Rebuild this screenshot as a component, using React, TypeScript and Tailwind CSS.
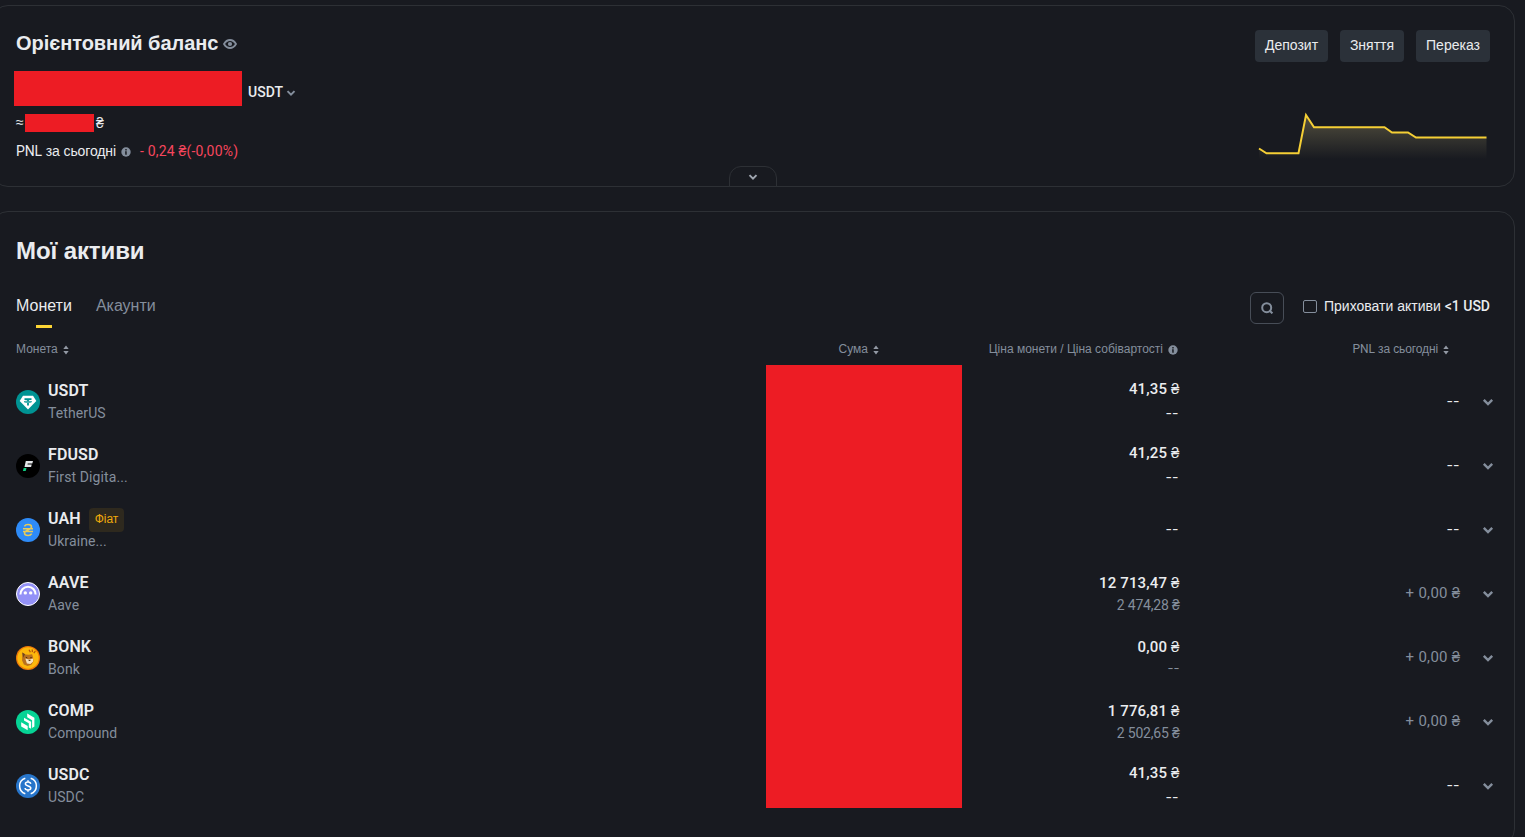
import type { ReactNode } from "react";

type Coin = {
    symbol: string;
    name: string;
    icon: ReactNode;
    badge?: string;
    price?: string;
    cost?: string;
    muted?: boolean;
    pnl?: string;
};

function ChevronDown({ className, size }: { className?: string; size: number }) {
    return (
        <svg width={size} height={size} viewBox="0 0 12 12" fill="none" className={className}>
            <path d="M1.800 3.800L6 8l4.200-4.200" stroke="currentColor" strokeWidth="2.400" />
        </svg>
    );
}

function SortIcon() {
    return (
        <svg width="6" height="10" viewBox="0 0 6 10" className="mt-0.5 ml-[5px] shrink-0 text-[#9299a4]">
            <path d="M0.300 4L3 0.600 5.700 4zM0.300 6L3 9.400 5.700 6z" fill="currentColor" />
        </svg>
    );
}

function InfoIcon({ className }: { className?: string }) {
    return (
        <svg width="10" height="10" viewBox="0 0 10 10" className={className}>
            <circle cx="5" cy="5" r="4.700" fill="#848e9c" />
            <path d="M4.100 4.300h1.600v3.500H4.300M4.300 2.100h1.400v1.300H4.300z" fill="#181a20" />
        </svg>
    );
}

function EyeIcon() {
    return (
        <svg width="14" height="10" viewBox="0 0 14 10" fill="none" className="mt-px ml-[5px]">
            <path d="M1 5c1.500-2.600 3.500-4 6-4s4.500 1.400 6 4c-1.500 2.600-3.500 4-6 4S2.500 7.600 1 5z" stroke="#848e9c" strokeWidth="1.800" />
            <circle cx="7" cy="5" r="2.100" fill="#848e9c" />
        </svg>
    );
}

const TetherIcon = (
    <svg width="24" height="24" viewBox="0 0 24 24" className="shrink-0">
        <circle cx="12" cy="12" r="12" fill="#009393" />
        <path d="M7 5.800h10l3.300 5.200L12 19.400 3.700 11z" fill="#fff" />
        <path d="M8.500 8.200h7v1.700h-2.600v.9c1.800.1 3.100.5 3.100 1s-1.300 1-3.100 1.100v2.500h-1.800v-2.500C9.300 12.800 8 12.400 8 11.800s1.300-.9 3.100-1v-.9H8.500z" fill="#009393" />
        <path d="M9.200 11.800c1.700.5 3.900.5 5.600 0" fill="none" stroke="#fff" strokeWidth=".5" />
    </svg>
);

const FdusdIcon = (
    <svg width="24" height="24" viewBox="0 0 24 24" className="shrink-0">
        <circle cx="12" cy="12" r="12" fill="#000" />
        <path d="M9.800 7h7.200l-.7 2.600h-4.600l-.2.900h4.200l-.6 2.500H8.500z" fill="#e4e6e8" />
        <path d="M7.700 13.900h2.800l-.8 3.100H6.900z" fill="#0ecb81" />
    </svg>
);

const UahIcon = (
    <svg width="24" height="24" viewBox="0 0 24 24" className="shrink-0">
        <circle cx="12" cy="12" r="12" fill="#2e8bf7" />
        <path
            d="M8.400 8.300C9 7.200 10.300 6.600 12 6.600c2.100 0 3.500.9 3.500 2.400 0 3-7 2.900-7 6 0 1.600 1.500 2.500 3.600 2.500 1.700 0 3-.7 3.600-1.800M7 10.700h10M7 13.400h10"
            fill="none"
            stroke="#e6cb5a"
            strokeWidth="1.500"
        />
    </svg>
);

const AaveIcon = (
    <svg width="24" height="24" viewBox="0 0 24 24" className="shrink-0">
        <circle cx="12" cy="12" r="11.500" fill="#9391f7" stroke="#fff" />
        <path d="M4.400 12.600C4.400 8.100 7.700 4.700 12 4.700s7.600 3.400 7.600 7.900" fill="none" stroke="#fff" strokeWidth="2.100" />
        <circle cx="9.300" cy="10.900" r="1.700" fill="#fff" />
        <circle cx="14.700" cy="10.900" r="1.700" fill="#fff" />
    </svg>
);

const BonkIcon = (
    <svg width="24" height="24" viewBox="0 0 24 24" className="shrink-0">
        <circle cx="12" cy="12" r="12" fill="#ee7a08" />
        <circle cx="12" cy="12" r="10.700" fill="#fcb80c" />
        <path d="M6.300 6.400l3.300 2.200 3.300.1 3.200-.5 1 3.300.3 4-2 3.300-3.800 1.100-3.700-1.500-1.800-4z" fill="#b9701f" />
        <path d="M9.300 12.600l3.600.9 4.300-1-.2 3.200-2.600 2.300-3.500-.6z" fill="#f6e0bb" />
        <path d="M6.300 6.400L9 8.200l-1.800 3.500z" fill="#6e4520" />
        <path d="M9.800 11.300l1.500.5M14.300 11.700l1.400-.2M12.700 14.500l1.800-.2" stroke="#4a2c12" strokeWidth="1" />
        <path d="M13 3.800l1.400 2.400M16.200 3.500l.2 2.600M19.400 5.200l-1.600 2" stroke="#b5500b" strokeWidth="1.200" />
    </svg>
);

const CompIcon = (
    <svg width="24" height="24" viewBox="0 0 24 24" className="shrink-0">
        <circle cx="12" cy="12" r="12" fill="#06d395" />
        <path d="M11.200 3.500l7.200 4.200v8.800l-2.300 1.400V10.200l-4.900-2.900z" fill="#fff" />
        <path d="M8 7.700l7.100 4.100v7l-2.300-1.300v-4.300L8 10.400z" fill="#fff" />
        <path d="M5.200 12.200l6.500 3.700v4.400l-6.500-3.700z" fill="#fff" />
    </svg>
);

const UsdcIcon = (
    <svg width="24" height="24" viewBox="0 0 24 24" fill="none" stroke="#fff" className="shrink-0">
        <circle cx="12" cy="12" r="12" fill="#2775ca" stroke="none" />
        <path d="M9.300 4.200a8.200 8.200 0 0 0 0 15.600M14.700 4.200a8.200 8.200 0 0 1 0 15.600" strokeWidth="1.500" />
        <path d="M14.700 9.900c-.1-1.300-1.100-2-2.700-2s-2.600.7-2.600 1.900c0 2.900 5.400 1.300 5.400 4.300 0 1.300-1.100 2-2.800 2s-2.800-.8-2.900-2.100M12 6.200v1.700M12 16v1.800" strokeWidth="1.500" />
    </svg>
);

const coins: Coin[] = [
    { symbol: "USDT", name: "TetherUS", icon: TetherIcon, price: "41,35" },
    { symbol: "FDUSD", name: "First Digita...", icon: FdusdIcon, price: "41,25" },
    { symbol: "UAH", name: "Ukraine...", icon: UahIcon, badge: "Фіат" },
    { symbol: "AAVE", name: "Aave", icon: AaveIcon, price: "12 713,47", cost: "2 474,28 ₴", muted: true, pnl: "+ 0,00 ₴" },
    { symbol: "BONK", name: "Bonk", icon: BonkIcon, price: "0,00", muted: true, pnl: "+ 0,00 ₴" },
    { symbol: "COMP", name: "Compound", icon: CompIcon, price: "1 776,81", cost: "2 502,65 ₴", muted: true, pnl: "+ 0,00 ₴" },
    { symbol: "USDC", name: "USDC", icon: UsdcIcon, price: "41,35" },
];

function Cost({ coin }: { coin: Coin }) {
    if (coin.cost) {
        return <div className="text-sm leading-[22px] tracking-[-0.2px] text-[#848e9c]">{coin.cost}</div>;
    }
    if (coin.muted) {
        return <div className="pb-0.5 font-[Inter,sans-serif] text-[13px] leading-5 text-[#848e9c]">--</div>;
    }
    return (
        <div className={coin.price ? "mr-px pb-[3px] font-[Inter,sans-serif] text-sm leading-[22px]" : "mr-px pb-0.5 font-[Inter,sans-serif] text-sm leading-[22px]"}>
            --
        </div>
    );
}

function CoinRow({ coin }: { coin: Coin }) {
    return (
        <div className="flex h-16 items-center font-[Roboto,sans-serif]">
            <div className="flex w-[750px] shrink-0 items-center">
                {coin.icon}
                <div className="ml-2">
                    <div className="flex h-[22px] items-center">
                        <span className="text-base leading-[22px] font-semibold tracking-[0.1px]">{coin.symbol}</span>
                        {coin.badge && (
                            <span className="mt-0.5 ml-2 flex h-6 items-center rounded bg-[#2e291e] px-1.5 pb-0.5 font-['Liberation_Sans',sans-serif] text-xs text-[#f0a90b]">
                                {coin.badge}
                            </span>
                        )}
                    </div>
                    <div className="pt-px text-sm leading-[21px] tracking-[0.1px] text-[#848e9c]">{coin.name}</div>
                </div>
            </div>
            <div className="flex w-[413.5px] shrink-0 flex-col items-end">
                {coin.price && (
                    <div
                        className={
                            coin.muted
                                ? "text-[15px] leading-[22px] font-medium tracking-[0.15px]"
                                : "text-[15px] leading-[25px] font-medium tracking-[0.15px]"
                        }
                    >
                        {coin.price} ₴
                    </div>
                )}
                <Cost coin={coin} />
            </div>
            <div className="flex w-[281px] shrink-0 justify-end">
                {coin.pnl ? (
                    <span className="pb-px text-[15px] leading-[23px] tracking-[0.3px] text-[#848e9c]">{coin.pnl}</span>
                ) : (
                    <span className="mr-px pb-0.5 font-[Inter,sans-serif] text-sm">--</span>
                )}
            </div>
            <ChevronDown size={12} className="ml-[21.5px] shrink-0 text-[#848e9c]" />
        </div>
    );
}

function BalanceChart() {
    return (
        <svg width="232" height="50" viewBox="1257 111 232 50" fill="none">
            <defs>
                <linearGradient id="area" x1="0" y1="115" x2="0" y2="159" gradientUnits="userSpaceOnUse">
                    <stop offset="0" stopColor="#d0c080" stopOpacity="0.32" />
                    <stop offset="1" stopColor="#d0c080" stopOpacity="0" />
                </linearGradient>
            </defs>
            <path
                d="M1259 148.500l7.500 4.800h32L1306 115l8 12.300h70.500l7.500 5.200h16l8 5h70.500V159H1259z"
                fill="url(#area)"
            />
            <path d="M1259 148.500l7.500 4.800h32L1306 115l8 12.300h70.500l7.500 5.200h16l8 5h70.500" stroke="#f5cf35" strokeWidth="2" />
        </svg>
    );
}

function BalanceCard() {
    return (
        <section className="relative flex h-[182px] justify-between rounded-2xl border border-[#2d3035] px-[23px] pr-6">
            <div>
                <div className="mt-[23px] flex h-7 items-center">
                    <h1 className="text-xl font-bold tracking-[-0.05px]">Орієнтовний баланс</h1>
                    <EyeIcon />
                </div>
                <div className="-ml-0.5 mt-3.5 flex h-[35px]">
                    <div className="w-[228px] bg-[#ed1c24]" />
                    <span className="mt-[11px] ml-1.5 font-[Roboto,sans-serif] text-sm font-medium">USDT</span>
                    <ChevronDown size={10} className="mt-[17px] ml-[3px] text-[#848e9c]" />
                </div>
                <div className="mt-2 flex h-[18px] items-center font-[Roboto,sans-serif] text-sm">
                    <span className="w-[9px] pb-0.5 font-['Liberation_Sans',sans-serif] text-sm">≈</span>
                    <div className="h-[18px] w-[69px] bg-[#ed1c24]" />
                    <span className="ml-0.5">₴</span>
                </div>
                <div className="mt-[9px] flex h-5 items-center text-sm">
                    <span className="tracking-[-0.12px]">
                        <span className="font-[Roboto,sans-serif]">PNL</span> за сьогодні
                    </span>
                    <InfoIcon className="mt-0.5 ml-[5px]" />
                    <span className="ml-[9px] font-[Roboto,sans-serif] tracking-[0.2px] text-[#f6465d]">- 0,24 ₴(-0,00%)</span>
                </div>
            </div>
            <div className="flex flex-col items-end">
                <div className="mt-6 flex gap-3 text-sm">
                    <button className="h-8 w-[73px] rounded bg-[#2b3139] pb-0.5">Депозит</button>
                    <button className="h-8 w-16 rounded bg-[#2b3139] pb-0.5">Зняття</button>
                    <button className="h-8 w-[74px] rounded bg-[#2b3139] pb-0.5">Переказ</button>
                </div>
                <div className="mt-[49px] mr-[1px]">
                    <BalanceChart />
                </div>
            </div>
            <button className="absolute -bottom-px left-[736px] flex h-[21px] w-12 items-center justify-center rounded-t-xl border border-[#2d3035]">
                <ChevronDown size={10} className="text-[#a0a6b0]" />
            </button>
        </section>
    );
}

function AssetsCard() {
    return (
        <section className="mt-6 h-[634px] rounded-2xl border border-[#2d3035] px-[23px] pr-6">
            <h2 className="mt-[23px] text-2xl leading-8 font-bold tracking-[-0.1px]">Мої активи</h2>
            <div className="mt-[25px] flex h-8 justify-between">
                <div className="flex gap-6 text-base leading-7">
                    <div className="flex flex-col items-center">
                        <span>Монети</span>
                        <span className="mt-[5px] h-[3px] w-4 shrink-0 bg-[#fcd535]" />
                    </div>
                    <span className="text-[#848e9c]">Акаунти</span>
                </div>
                <div className="flex">
                    <button className="flex h-8 w-[34px] items-center justify-center rounded-md border border-[#474d57]">
                        <svg width="12" height="12" viewBox="0 0 12 12" fill="none" stroke="#848e9c" strokeWidth="2">
                            <circle cx="5.700" cy="5.700" r="4.500" />
                            <path d="M8.200 8.200l3.200 3.200" />
                        </svg>
                    </button>
                    <label className="flex h-[29px] items-center pl-[19px] text-sm">
                        <span className="h-[13px] w-3.5 rounded-xs border border-[#848e9c]" />
                        <span className="ml-[7px] pb-0.5">
                            Приховати активи <span className="font-[Roboto,sans-serif] font-medium">&lt;1 USD</span>
                        </span>
                    </label>
                </div>
            </div>
            <div className="mt-[17px] flex h-4 items-center text-xs text-[#848e9c]">
                <div className="flex w-[750px] items-center">
                    Монета
                    <SortIcon />
                </div>
                <div className="flex w-[113px] items-center justify-end">
                    Сума
                    <SortIcon />
                </div>
                <div className="flex w-[299px] items-center justify-end">
                    Ціна монети / Ціна собівартості
                    <InfoIcon className="mt-0.5 ml-[5px]" />
                </div>
                <div className="flex w-[271px] items-center justify-end">
                    <span className="tracking-[-0.12px]">
                        <span className="font-[Roboto,sans-serif]">PNL</span> за сьогодні
                    </span>
                    <SortIcon />
                </div>
            </div>
            <div className="relative mt-[13px]">
                {coins.map((coin) => (
                    <CoinRow key={coin.symbol} coin={coin} />
                ))}
                {/* hides the amounts */}
                <div className="absolute -top-[5px] left-[750px] h-[443px] w-[196px] bg-[#ed1c24]" />
            </div>
        </section>
    );
}

export default function App() {
    return (
        <main className="h-[837px] w-[1525px] overflow-hidden bg-[#181a20] font-['Liberation_Sans',sans-serif] text-[#eaecef]">
            <div className="-ml-2 w-[1523px] pt-[5px]">
                <BalanceCard />
                <AssetsCard />
            </div>
        </main>
    );
}
